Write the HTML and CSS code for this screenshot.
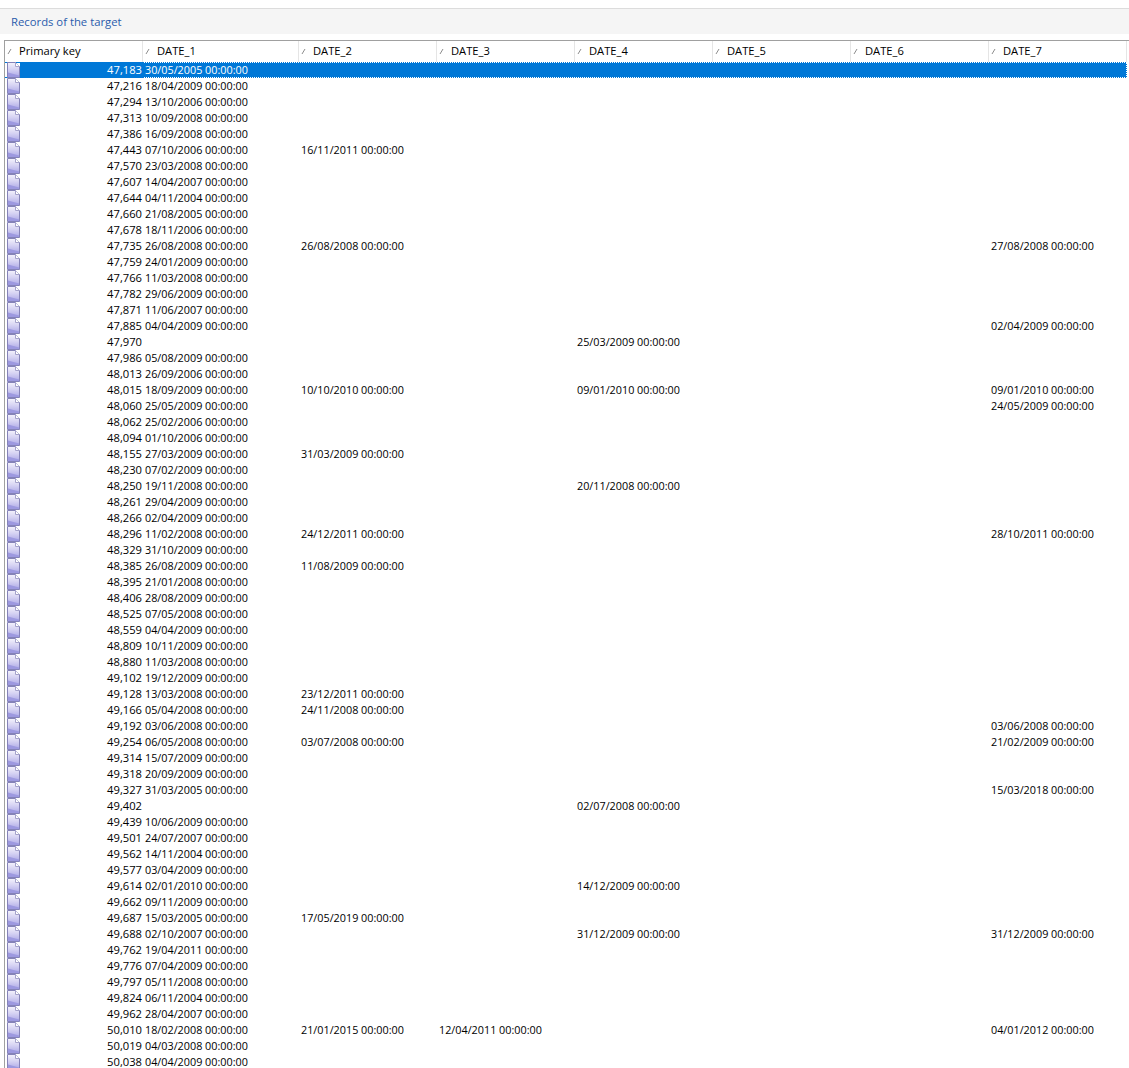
FILE: index.html
```html
<!DOCTYPE html>
<html lang="en">
<head>
<meta charset="utf-8">
<title>Records of the target</title>
<link rel="stylesheet" href="styles.css">
</head>
<body>
<svg class="defs" width="0" height="0" aria-hidden="true">
  <defs>
    <linearGradient id="docfill" x1="0" y1="0" x2="0" y2="1">
      <stop offset="0" stop-color="#f4f3fc"/>
      <stop offset="0.45" stop-color="#d6d3f3"/>
      <stop offset="1" stop-color="#a9a5e6"/>
    </linearGradient>
    <symbol id="doc" viewBox="0 0 13 16">
      <path d="M0.5 0.5H8.5L12.5 4.5V15.5H0.5Z" fill="url(#docfill)" stroke="#8583b8"/>
      <path d="M8.5 0.5V4.5H12.5" fill="#fff" stroke="#a5a3cc"/>
      <path d="M1 10.5L12 13.5V15H1Z" fill="#9d99e0"/>
    </symbol>
    <symbol id="sort" viewBox="0 0 5 5">
      <path d="M1 5L4 0" stroke="#8c8c8c" fill="none"/>
    </symbol>
  </defs>
</svg>
<main class="page">
  <h1 class="title">Records of the target</h1>
  <section class="grid">
    <table>
      <colgroup><col class="c-key"><col class="c-first"><col class="c"><col class="c"><col class="c"><col class="c"><col class="c"><col class="c"></colgroup>
      <thead>
        <tr>
          <th class="first"><svg class="sort"><use href="#sort"/></svg>Primary key</th>
          <th><svg class="sort"><use href="#sort"/></svg>DATE_1</th>
          <th><svg class="sort"><use href="#sort"/></svg>DATE_2</th>
          <th><svg class="sort"><use href="#sort"/></svg>DATE_3</th>
          <th><svg class="sort"><use href="#sort"/></svg>DATE_4</th>
          <th><svg class="sort"><use href="#sort"/></svg>DATE_5</th>
          <th><svg class="sort"><use href="#sort"/></svg>DATE_6</th>
          <th><svg class="sort"><use href="#sort"/></svg>DATE_7</th>
        </tr>
      </thead>
      <tbody>
        <tr class="sel"><td class="key"><svg class="doc"><use href="#doc"/></svg>47,183</td><td>30/05/2005 00:00:00</td><td></td><td></td><td></td><td></td><td></td><td></td></tr>
        <tr><td class="key"><svg class="doc"><use href="#doc"/></svg>47,216</td><td>18/04/2009 00:00:00</td><td></td><td></td><td></td><td></td><td></td><td></td></tr>
        <tr><td class="key"><svg class="doc"><use href="#doc"/></svg>47,294</td><td>13/10/2006 00:00:00</td><td></td><td></td><td></td><td></td><td></td><td></td></tr>
        <tr><td class="key"><svg class="doc"><use href="#doc"/></svg>47,313</td><td>10/09/2008 00:00:00</td><td></td><td></td><td></td><td></td><td></td><td></td></tr>
        <tr><td class="key"><svg class="doc"><use href="#doc"/></svg>47,386</td><td>16/09/2008 00:00:00</td><td></td><td></td><td></td><td></td><td></td><td></td></tr>
        <tr><td class="key"><svg class="doc"><use href="#doc"/></svg>47,443</td><td>07/10/2006 00:00:00</td><td>16/11/2011 00:00:00</td><td></td><td></td><td></td><td></td><td></td></tr>
        <tr><td class="key"><svg class="doc"><use href="#doc"/></svg>47,570</td><td>23/03/2008 00:00:00</td><td></td><td></td><td></td><td></td><td></td><td></td></tr>
        <tr><td class="key"><svg class="doc"><use href="#doc"/></svg>47,607</td><td>14/04/2007 00:00:00</td><td></td><td></td><td></td><td></td><td></td><td></td></tr>
        <tr><td class="key"><svg class="doc"><use href="#doc"/></svg>47,644</td><td>04/11/2004 00:00:00</td><td></td><td></td><td></td><td></td><td></td><td></td></tr>
        <tr><td class="key"><svg class="doc"><use href="#doc"/></svg>47,660</td><td>21/08/2005 00:00:00</td><td></td><td></td><td></td><td></td><td></td><td></td></tr>
        <tr><td class="key"><svg class="doc"><use href="#doc"/></svg>47,678</td><td>18/11/2006 00:00:00</td><td></td><td></td><td></td><td></td><td></td><td></td></tr>
        <tr><td class="key"><svg class="doc"><use href="#doc"/></svg>47,735</td><td>26/08/2008 00:00:00</td><td>26/08/2008 00:00:00</td><td></td><td></td><td></td><td></td><td>27/08/2008 00:00:00</td></tr>
        <tr><td class="key"><svg class="doc"><use href="#doc"/></svg>47,759</td><td>24/01/2009 00:00:00</td><td></td><td></td><td></td><td></td><td></td><td></td></tr>
        <tr><td class="key"><svg class="doc"><use href="#doc"/></svg>47,766</td><td>11/03/2008 00:00:00</td><td></td><td></td><td></td><td></td><td></td><td></td></tr>
        <tr><td class="key"><svg class="doc"><use href="#doc"/></svg>47,782</td><td>29/06/2009 00:00:00</td><td></td><td></td><td></td><td></td><td></td><td></td></tr>
        <tr><td class="key"><svg class="doc"><use href="#doc"/></svg>47,871</td><td>11/06/2007 00:00:00</td><td></td><td></td><td></td><td></td><td></td><td></td></tr>
        <tr><td class="key"><svg class="doc"><use href="#doc"/></svg>47,885</td><td>04/04/2009 00:00:00</td><td></td><td></td><td></td><td></td><td></td><td>02/04/2009 00:00:00</td></tr>
        <tr><td class="key"><svg class="doc"><use href="#doc"/></svg>47,970</td><td></td><td></td><td></td><td>25/03/2009 00:00:00</td><td></td><td></td><td></td></tr>
        <tr><td class="key"><svg class="doc"><use href="#doc"/></svg>47,986</td><td>05/08/2009 00:00:00</td><td></td><td></td><td></td><td></td><td></td><td></td></tr>
        <tr><td class="key"><svg class="doc"><use href="#doc"/></svg>48,013</td><td>26/09/2006 00:00:00</td><td></td><td></td><td></td><td></td><td></td><td></td></tr>
        <tr><td class="key"><svg class="doc"><use href="#doc"/></svg>48,015</td><td>18/09/2009 00:00:00</td><td>10/10/2010 00:00:00</td><td></td><td>09/01/2010 00:00:00</td><td></td><td></td><td>09/01/2010 00:00:00</td></tr>
        <tr><td class="key"><svg class="doc"><use href="#doc"/></svg>48,060</td><td>25/05/2009 00:00:00</td><td></td><td></td><td></td><td></td><td></td><td>24/05/2009 00:00:00</td></tr>
        <tr><td class="key"><svg class="doc"><use href="#doc"/></svg>48,062</td><td>25/02/2006 00:00:00</td><td></td><td></td><td></td><td></td><td></td><td></td></tr>
        <tr><td class="key"><svg class="doc"><use href="#doc"/></svg>48,094</td><td>01/10/2006 00:00:00</td><td></td><td></td><td></td><td></td><td></td><td></td></tr>
        <tr><td class="key"><svg class="doc"><use href="#doc"/></svg>48,155</td><td>27/03/2009 00:00:00</td><td>31/03/2009 00:00:00</td><td></td><td></td><td></td><td></td><td></td></tr>
        <tr><td class="key"><svg class="doc"><use href="#doc"/></svg>48,230</td><td>07/02/2009 00:00:00</td><td></td><td></td><td></td><td></td><td></td><td></td></tr>
        <tr><td class="key"><svg class="doc"><use href="#doc"/></svg>48,250</td><td>19/11/2008 00:00:00</td><td></td><td></td><td>20/11/2008 00:00:00</td><td></td><td></td><td></td></tr>
        <tr><td class="key"><svg class="doc"><use href="#doc"/></svg>48,261</td><td>29/04/2009 00:00:00</td><td></td><td></td><td></td><td></td><td></td><td></td></tr>
        <tr><td class="key"><svg class="doc"><use href="#doc"/></svg>48,266</td><td>02/04/2009 00:00:00</td><td></td><td></td><td></td><td></td><td></td><td></td></tr>
        <tr><td class="key"><svg class="doc"><use href="#doc"/></svg>48,296</td><td>11/02/2008 00:00:00</td><td>24/12/2011 00:00:00</td><td></td><td></td><td></td><td></td><td>28/10/2011 00:00:00</td></tr>
        <tr><td class="key"><svg class="doc"><use href="#doc"/></svg>48,329</td><td>31/10/2009 00:00:00</td><td></td><td></td><td></td><td></td><td></td><td></td></tr>
        <tr><td class="key"><svg class="doc"><use href="#doc"/></svg>48,385</td><td>26/08/2009 00:00:00</td><td>11/08/2009 00:00:00</td><td></td><td></td><td></td><td></td><td></td></tr>
        <tr><td class="key"><svg class="doc"><use href="#doc"/></svg>48,395</td><td>21/01/2008 00:00:00</td><td></td><td></td><td></td><td></td><td></td><td></td></tr>
        <tr><td class="key"><svg class="doc"><use href="#doc"/></svg>48,406</td><td>28/08/2009 00:00:00</td><td></td><td></td><td></td><td></td><td></td><td></td></tr>
        <tr><td class="key"><svg class="doc"><use href="#doc"/></svg>48,525</td><td>07/05/2008 00:00:00</td><td></td><td></td><td></td><td></td><td></td><td></td></tr>
        <tr><td class="key"><svg class="doc"><use href="#doc"/></svg>48,559</td><td>04/04/2009 00:00:00</td><td></td><td></td><td></td><td></td><td></td><td></td></tr>
        <tr><td class="key"><svg class="doc"><use href="#doc"/></svg>48,809</td><td>10/11/2009 00:00:00</td><td></td><td></td><td></td><td></td><td></td><td></td></tr>
        <tr><td class="key"><svg class="doc"><use href="#doc"/></svg>48,880</td><td>11/03/2008 00:00:00</td><td></td><td></td><td></td><td></td><td></td><td></td></tr>
        <tr><td class="key"><svg class="doc"><use href="#doc"/></svg>49,102</td><td>19/12/2009 00:00:00</td><td></td><td></td><td></td><td></td><td></td><td></td></tr>
        <tr><td class="key"><svg class="doc"><use href="#doc"/></svg>49,128</td><td>13/03/2008 00:00:00</td><td>23/12/2011 00:00:00</td><td></td><td></td><td></td><td></td><td></td></tr>
        <tr><td class="key"><svg class="doc"><use href="#doc"/></svg>49,166</td><td>05/04/2008 00:00:00</td><td>24/11/2008 00:00:00</td><td></td><td></td><td></td><td></td><td></td></tr>
        <tr><td class="key"><svg class="doc"><use href="#doc"/></svg>49,192</td><td>03/06/2008 00:00:00</td><td></td><td></td><td></td><td></td><td></td><td>03/06/2008 00:00:00</td></tr>
        <tr><td class="key"><svg class="doc"><use href="#doc"/></svg>49,254</td><td>06/05/2008 00:00:00</td><td>03/07/2008 00:00:00</td><td></td><td></td><td></td><td></td><td>21/02/2009 00:00:00</td></tr>
        <tr><td class="key"><svg class="doc"><use href="#doc"/></svg>49,314</td><td>15/07/2009 00:00:00</td><td></td><td></td><td></td><td></td><td></td><td></td></tr>
        <tr><td class="key"><svg class="doc"><use href="#doc"/></svg>49,318</td><td>20/09/2009 00:00:00</td><td></td><td></td><td></td><td></td><td></td><td></td></tr>
        <tr><td class="key"><svg class="doc"><use href="#doc"/></svg>49,327</td><td>31/03/2005 00:00:00</td><td></td><td></td><td></td><td></td><td></td><td>15/03/2018 00:00:00</td></tr>
        <tr><td class="key"><svg class="doc"><use href="#doc"/></svg>49,402</td><td></td><td></td><td></td><td>02/07/2008 00:00:00</td><td></td><td></td><td></td></tr>
        <tr><td class="key"><svg class="doc"><use href="#doc"/></svg>49,439</td><td>10/06/2009 00:00:00</td><td></td><td></td><td></td><td></td><td></td><td></td></tr>
        <tr><td class="key"><svg class="doc"><use href="#doc"/></svg>49,501</td><td>24/07/2007 00:00:00</td><td></td><td></td><td></td><td></td><td></td><td></td></tr>
        <tr><td class="key"><svg class="doc"><use href="#doc"/></svg>49,562</td><td>14/11/2004 00:00:00</td><td></td><td></td><td></td><td></td><td></td><td></td></tr>
        <tr><td class="key"><svg class="doc"><use href="#doc"/></svg>49,577</td><td>03/04/2009 00:00:00</td><td></td><td></td><td></td><td></td><td></td><td></td></tr>
        <tr><td class="key"><svg class="doc"><use href="#doc"/></svg>49,614</td><td>02/01/2010 00:00:00</td><td></td><td></td><td>14/12/2009 00:00:00</td><td></td><td></td><td></td></tr>
        <tr><td class="key"><svg class="doc"><use href="#doc"/></svg>49,662</td><td>09/11/2009 00:00:00</td><td></td><td></td><td></td><td></td><td></td><td></td></tr>
        <tr><td class="key"><svg class="doc"><use href="#doc"/></svg>49,687</td><td>15/03/2005 00:00:00</td><td>17/05/2019 00:00:00</td><td></td><td></td><td></td><td></td><td></td></tr>
        <tr><td class="key"><svg class="doc"><use href="#doc"/></svg>49,688</td><td>02/10/2007 00:00:00</td><td></td><td></td><td>31/12/2009 00:00:00</td><td></td><td></td><td>31/12/2009 00:00:00</td></tr>
        <tr><td class="key"><svg class="doc"><use href="#doc"/></svg>49,762</td><td>19/04/2011 00:00:00</td><td></td><td></td><td></td><td></td><td></td><td></td></tr>
        <tr><td class="key"><svg class="doc"><use href="#doc"/></svg>49,776</td><td>07/04/2009 00:00:00</td><td></td><td></td><td></td><td></td><td></td><td></td></tr>
        <tr><td class="key"><svg class="doc"><use href="#doc"/></svg>49,797</td><td>05/11/2008 00:00:00</td><td></td><td></td><td></td><td></td><td></td><td></td></tr>
        <tr><td class="key"><svg class="doc"><use href="#doc"/></svg>49,824</td><td>06/11/2004 00:00:00</td><td></td><td></td><td></td><td></td><td></td><td></td></tr>
        <tr><td class="key"><svg class="doc"><use href="#doc"/></svg>49,962</td><td>28/04/2007 00:00:00</td><td></td><td></td><td></td><td></td><td></td><td></td></tr>
        <tr><td class="key"><svg class="doc"><use href="#doc"/></svg>50,010</td><td>18/02/2008 00:00:00</td><td>21/01/2015 00:00:00</td><td>12/04/2011 00:00:00</td><td></td><td></td><td></td><td>04/01/2012 00:00:00</td></tr>
        <tr><td class="key"><svg class="doc"><use href="#doc"/></svg>50,019</td><td>04/03/2008 00:00:00</td><td></td><td></td><td></td><td></td><td></td><td></td></tr>
        <tr><td class="key"><svg class="doc"><use href="#doc"/></svg>50,038</td><td>04/04/2009 00:00:00</td><td></td><td></td><td></td><td></td><td></td><td></td></tr>
      </tbody>
    </table>
  </section>
</main>
</body>
</html>
```
FILE: styles.css
```css
html, body {
  margin: 0;
  height: 100%;
  overflow: hidden;
  background: #fff;
}
body {
  font-family: "Open Sans", "Noto Sans", sans-serif;
  font-size: 10.8px;
  color: #000;
}
.defs {
  display: block;
  height: 0;
}
.page {
  padding-top: 8px;
}
.title {
  margin: 0;
  height: 26px;
  padding-left: 11px;
  border-top: 1px solid #dcdcdc;
  box-sizing: border-box;
  background: #f5f5f5;
  font-size: 11.3px;
  font-weight: 400;
  line-height: 25px;
  color: #2a5cac;
}
.grid {
  margin: 6px 0 0 4px;
  border-top: 1px solid #a0a0a0;
  border-left: 1px solid #a0a0a0;
  height: 1040px;
}
table {
  width: 1122px;
  table-layout: fixed;
  border-collapse: separate;
  border-spacing: 0;
}
.c-key { width: 138px; }
.c-first { width: 156px; }
.c { width: 138px; }
th {
  height: 21px;
  padding: 0 0 2px 14px;
  box-sizing: border-box;
  border-right: 1px solid #e5e5e5;
  text-align: left;
  font-size: 11.2px;
  font-weight: 400;
  white-space: nowrap;
}
.sort {
  width: 5px;
  height: 5px;
  margin-left: -12px;
  margin-right: 7px;
  vertical-align: 1px;
}
td {
  height: 16px;
  padding: 0 0 0 2px;
  box-sizing: border-box;
  line-height: 16px;
  white-space: nowrap;
}
td.key {
  padding: 0 1px 0 0;
  font-size: 11.2px;
  text-align: right;
  position: relative;
}
.doc {
  position: absolute;
  left: 2px;
  top: 0;
  width: 13px;
  height: 16px;
}
.sel td {
  background: #0078d7;
  color: #fff;
}
.sel td.key::before {
  content: "";
  position: absolute;
  left: 0;
  top: 1px;
  bottom: 1px;
  width: 15px;
  background: #fff;
}
.sel .doc {
  z-index: 1;
}
.sel {
  outline: 1px dotted #ffffff;
  outline-offset: -1px;
}
```
